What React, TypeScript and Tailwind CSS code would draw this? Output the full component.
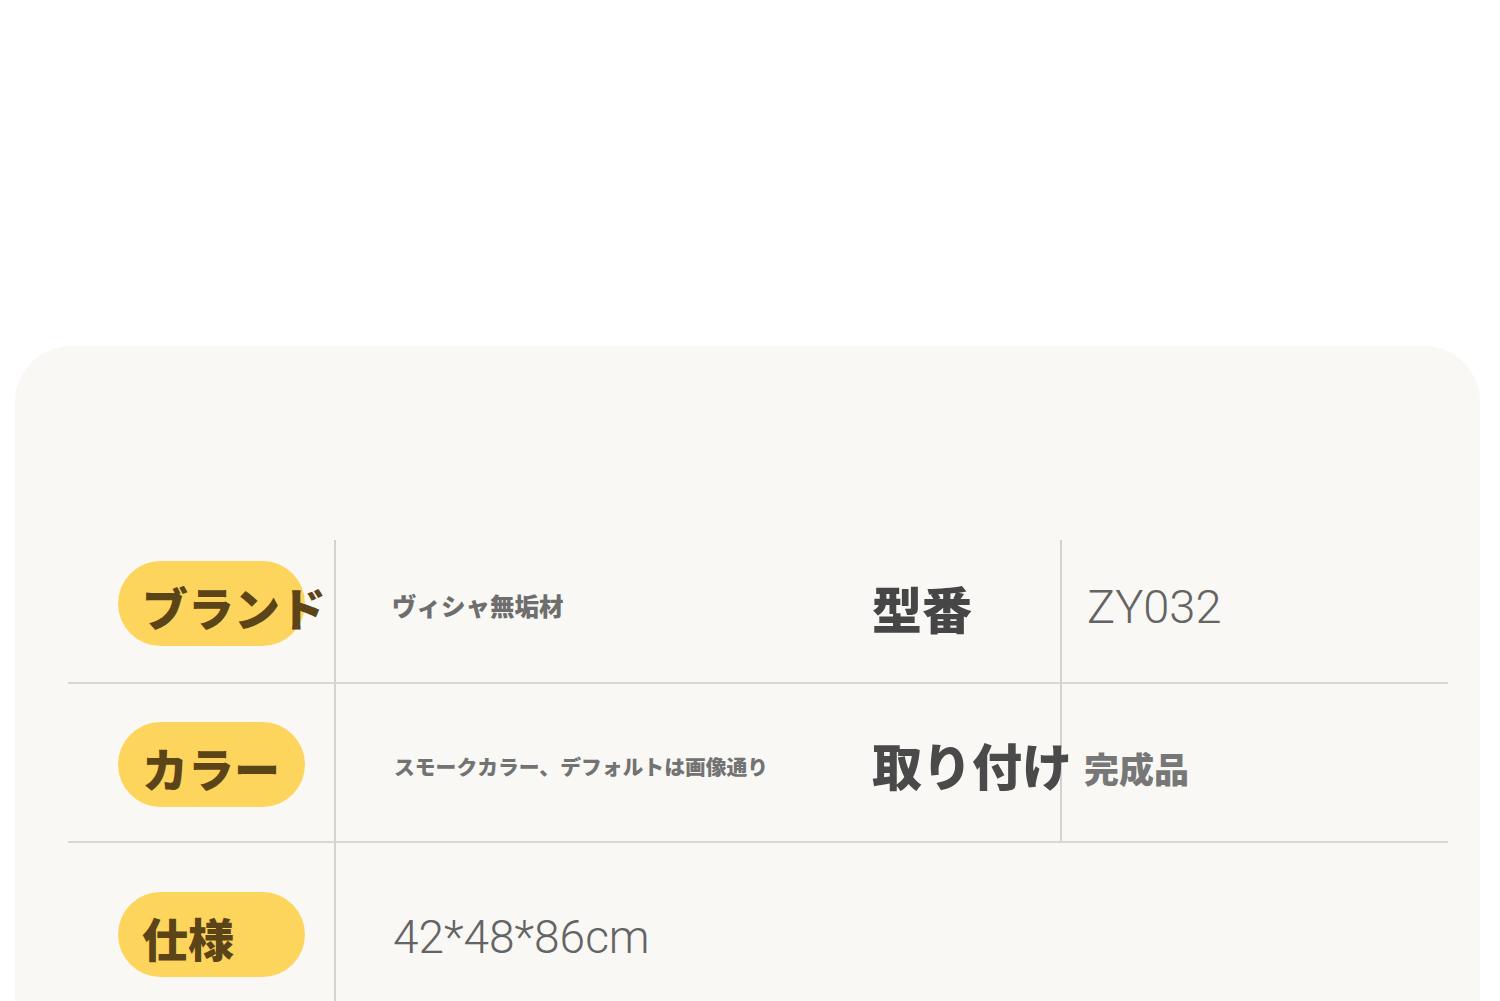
import React from "react";

const jp = { fontFamily: '"Noto Sans CJK JP", "Noto Sans", sans-serif' };
const num = { fontFamily: 'Roboto, "Noto Sans", sans-serif' };

function Pill({ text }: { text: string }) {
  return (
    <div className="relative w-[187px] h-[85px] rounded-full bg-[#fdd55c]">
      <span
        className="absolute left-[24px] top-[50%] -translate-y-[45%] whitespace-nowrap text-[46px] leading-none font-black text-[#5a4418]"
        style={jp}
      >
        {text}
      </span>
    </div>
  );
}

export default function App() {
  return (
    <div className="w-[1500px] h-[1001px] overflow-hidden bg-white">
      <div className="h-[346px]" />
      <div className="ml-[15px] w-[1465px] h-[700px] rounded-t-[56px] bg-[#f9f8f5] pt-[194px] pl-[53px]">
        <div className="w-[1380px]">
          {/* Row 1 */}
          <div className="flex h-[144px] border-b-2 border-[#d8d7d4]">
            <div className="w-[268px] pl-[50px] pt-[21px] border-r-2 border-[#d3d2cf]">
              <Pill text="ブランド" />
            </div>
            <div className="w-[536px] pl-[56px] pb-[9px] flex items-center">
              <span className="text-[24.5px] font-black text-[#6e6e6e] whitespace-nowrap" style={jp}>
                ヴィシャ無垢材
              </span>
            </div>
            <div className="w-[190px] pb-[9px] flex items-center border-r-2 border-[#d3d2cf]">
              <span className="text-[50px] leading-none font-black text-[#464646] whitespace-nowrap" style={jp}>
                型番
              </span>
            </div>
            <div className="flex-1 pl-[25px] pb-[9px] flex items-center">
              <span className="text-[47px] leading-none font-light text-[#646464]" style={num}>
                ZY032
              </span>
            </div>
          </div>
          {/* Row 2 */}
          <div className="flex h-[159px] border-b-2 border-[#d8d7d4]">
            <div className="w-[268px] pl-[50px] pt-[38px] border-r-2 border-[#d3d2cf]">
              <Pill text="カラー" />
            </div>
            <div className="w-[536px] pl-[58px] pt-[8px] flex items-center">
              <span className="text-[20.8px] font-black text-[#737373] whitespace-nowrap" style={jp}>
                スモークカラー、デフォルトは画像通り
              </span>
            </div>
            <div className="relative w-[190px] pt-[3px] flex items-center border-r-2 border-[#d3d2cf]">
              <span className="text-[50px] leading-none font-black text-[#4a4a4a] whitespace-nowrap" style={jp}>
                取り付け
              </span>
            </div>
            <div className="flex-1 pl-[22px] pt-[10px] flex items-center">
              <span className="text-[35px] leading-none font-black text-[#777777] whitespace-nowrap" style={jp}>
                完成品
              </span>
            </div>
          </div>
          {/* Row 3 */}
          <div className="flex h-[170px]">
            <div className="w-[268px] pl-[50px] pt-[49px] border-r-2 border-[#d3d2cf]">
              <Pill text="仕様" />
            </div>
            <div className="flex-1 pl-[57px] pt-[28px] pb-[10px] flex items-center">
              <span className="text-[46px] leading-none font-light text-[#646464]" style={num}>
                42*48*86cm
              </span>
            </div>
          </div>
        </div>
      </div>
    </div>
  );
}
